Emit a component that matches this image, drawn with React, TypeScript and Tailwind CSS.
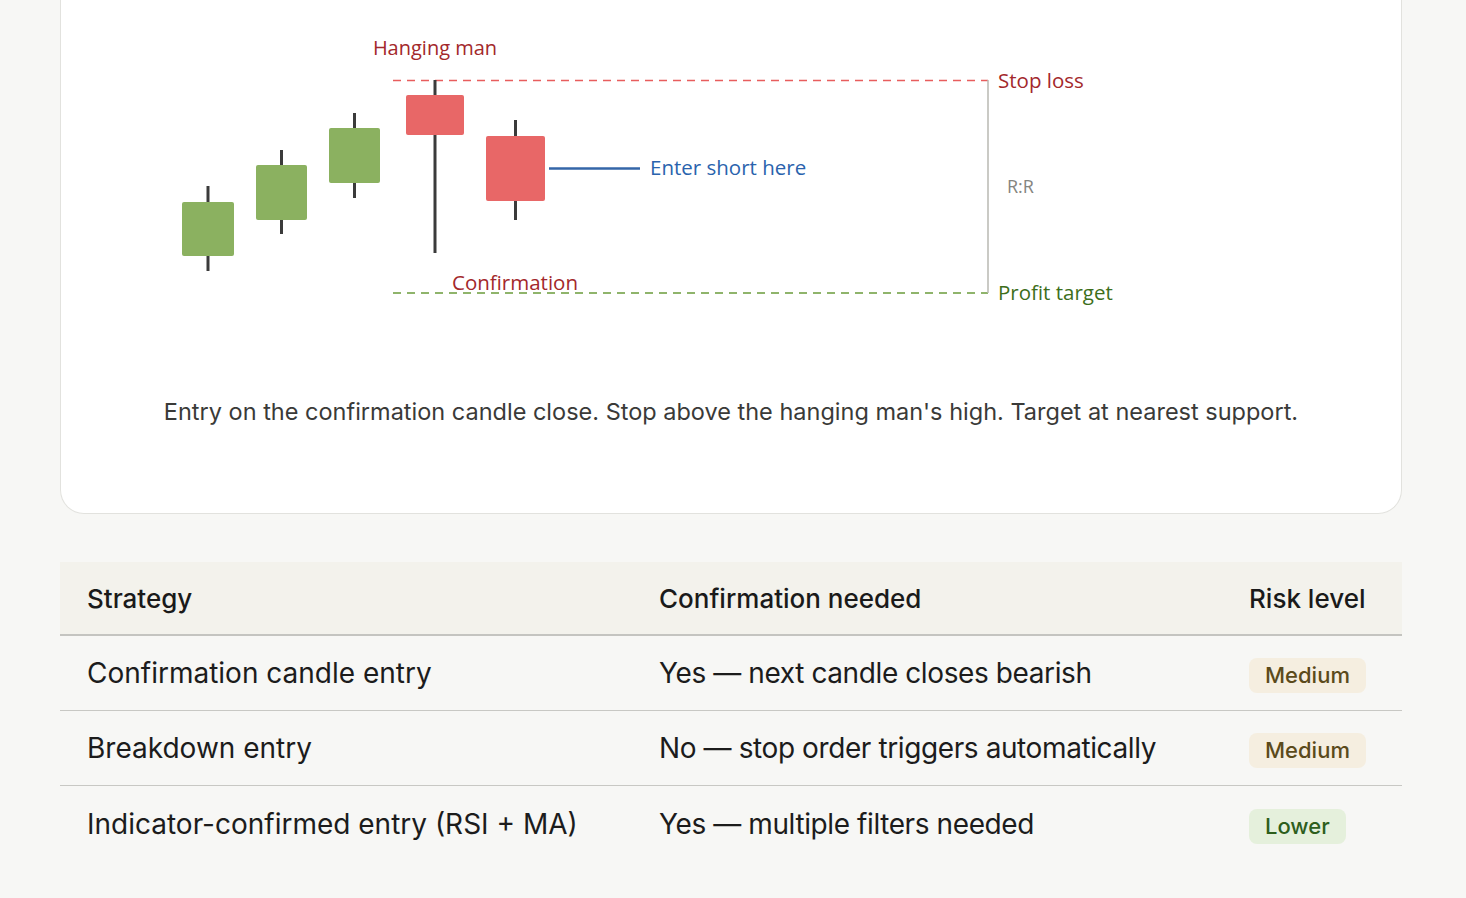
import React from 'react';

interface Candle {
  x: number;
  w: number;
  top: number;
  bottom: number;
  wickTop: number;
  wickBottom: number;
  bull: boolean;
}

interface StrategyRow {
  strategy: string;
  confirmation: string;
  risk: 'Medium' | 'Lower';
}

const candles: Candle[] = [
  { x: 182, w: 52, top: 202, bottom: 256, wickTop: 186, wickBottom: 271, bull: true },
  { x: 256, w: 51, top: 165, bottom: 220, wickTop: 150, wickBottom: 234, bull: true },
  { x: 329, w: 51, top: 128, bottom: 183, wickTop: 113, wickBottom: 198, bull: true },
  { x: 406, w: 58, top: 95, bottom: 135, wickTop: 80, wickBottom: 253, bull: false },
  { x: 486, w: 59, top: 136, bottom: 201, wickTop: 120, wickBottom: 220, bull: false },
];

const rows: StrategyRow[] = [
  { strategy: 'Confirmation candle entry', confirmation: 'Yes — next candle closes bearish', risk: 'Medium' },
  { strategy: 'Breakdown entry', confirmation: 'No — stop order triggers automatically', risk: 'Medium' },
  { strategy: 'Indicator-confirmed entry (RSI + MA)', confirmation: 'Yes — multiple filters needed', risk: 'Lower' },
];

const labelFont = { fontFamily: '"Open Sans", "Noto Sans", sans-serif' };

function ShortSetupChart() {
  return (
    <svg width={1340} height={340} viewBox="61 0 1340 340" className="block">
      {/* stop / target levels */}
      <line x1={393} y1={80.5} x2={988} y2={80.5} stroke="#e85d5d" strokeWidth={1.5} strokeDasharray="8 6" />
      <line x1={393} y1={293} x2={988} y2={293} stroke="#6b9c3b" strokeWidth={1.5} strokeDasharray="8 6" />
      <line x1={988} y1={80} x2={988} y2={293} stroke="#b8b8b2" strokeWidth={1.5} />

      {candles.map((c, i) => {
        const mid = c.x + c.w / 2;
        return (
          <g key={i}>
            <line x1={mid} y1={c.wickTop} x2={mid} y2={c.wickBottom} stroke="#3b3b3b" strokeWidth={3} />
            <rect
              x={c.x}
              y={c.top}
              width={c.w}
              height={c.bottom - c.top}
              rx={2}
              fill={c.bull ? '#8bb160' : '#e86767'}
            />
          </g>
        );
      })}

      <line x1={549} y1={168.5} x2={640} y2={168.5} stroke="#3466a8" strokeWidth={2.5} />

      <text x={435} y={47} textAnchor="middle" dominantBaseline="central" fontSize={20} fill="#a3282b" style={labelFont}>
        Hanging man
      </text>
      <text x={515} y={282} textAnchor="middle" dominantBaseline="central" fontSize={20.5} fill="#a3282b" style={labelFont}>
        Confirmation
      </text>
      <text x={650} y={167} dominantBaseline="central" fontSize={20.5} fill="#2a63ad" style={labelFont}>
        Enter short here
      </text>
      <text x={998} y={80} dominantBaseline="central" fontSize={20.5} fill="#a3282b" style={labelFont}>
        Stop loss
      </text>
      <text x={1007} y={186} dominantBaseline="central" fontSize={18} fill="#858580" style={labelFont}>
        R:R
      </text>
      <text x={998} y={292} dominantBaseline="central" fontSize={20.5} fill="#3d6e1a" style={labelFont}>
        Profit target
      </text>
    </svg>
  );
}

function RiskBadge({ risk }: { risk: StrategyRow['risk'] }) {
  const medium = risk === 'Medium';
  return (
    <span
      className={
        medium
          ? 'inline-flex h-[35px] items-center rounded-lg bg-[#f5eee0] px-[16px] text-[22px] font-medium text-[#5b4a1b]'
          : 'inline-flex h-[35px] items-center rounded-lg bg-[#e5f0dc] px-[16px] text-[22px] font-medium text-[#2d5e1c]'
      }
    >
      {risk}
    </span>
  );
}

export default function App() {
  return (
    <div className="min-h-[898px] bg-[#f7f7f5] pl-[60px] pr-[64px]" style={{ fontFamily: 'Inter, "Liberation Sans", sans-serif' }}>
      <div className="rounded-b-[24px] border border-t-0 border-[#e2e2de] bg-white pb-[85px]">
        <ShortSetupChart />
        <p className="mt-[56px] text-center text-[23.5px] leading-[32px] text-[#3a3a38]">
          Entry on the confirmation candle close. Stop above the hanging man's high. Target at nearest support.
        </p>
      </div>

      <div className="mt-[48px]">
        <div className="grid h-[74px] grid-cols-[572px_590px_1fr] items-center border-b-2 border-[#c4c4c0] bg-[#f3f2ec] text-[26px] font-medium text-[#1a1a1a]">
          <div className="pl-[27px]">Strategy</div>
          <div className="pl-[27px]">Confirmation needed</div>
          <div className="pl-[27px]">Risk level</div>
        </div>
        {rows.map((row, i) => (
          <div
            key={row.strategy}
            className={
              i < rows.length - 1
                ? 'grid h-[75px] grid-cols-[572px_590px_1fr] items-center border-b border-[#c8c8c4] text-[28px] text-[#1c1c1c]'
                : 'grid h-[75px] grid-cols-[572px_590px_1fr] items-center text-[28px] text-[#1c1c1c]'
            }
          >
            <div className="pl-[27px]">{row.strategy}</div>
            <div className="pl-[27px] tracking-[-0.4px]">{row.confirmation}</div>
            <div className="pl-[27px]">
              <RiskBadge risk={row.risk} />
            </div>
          </div>
        ))}
      </div>
    </div>
  );
}
